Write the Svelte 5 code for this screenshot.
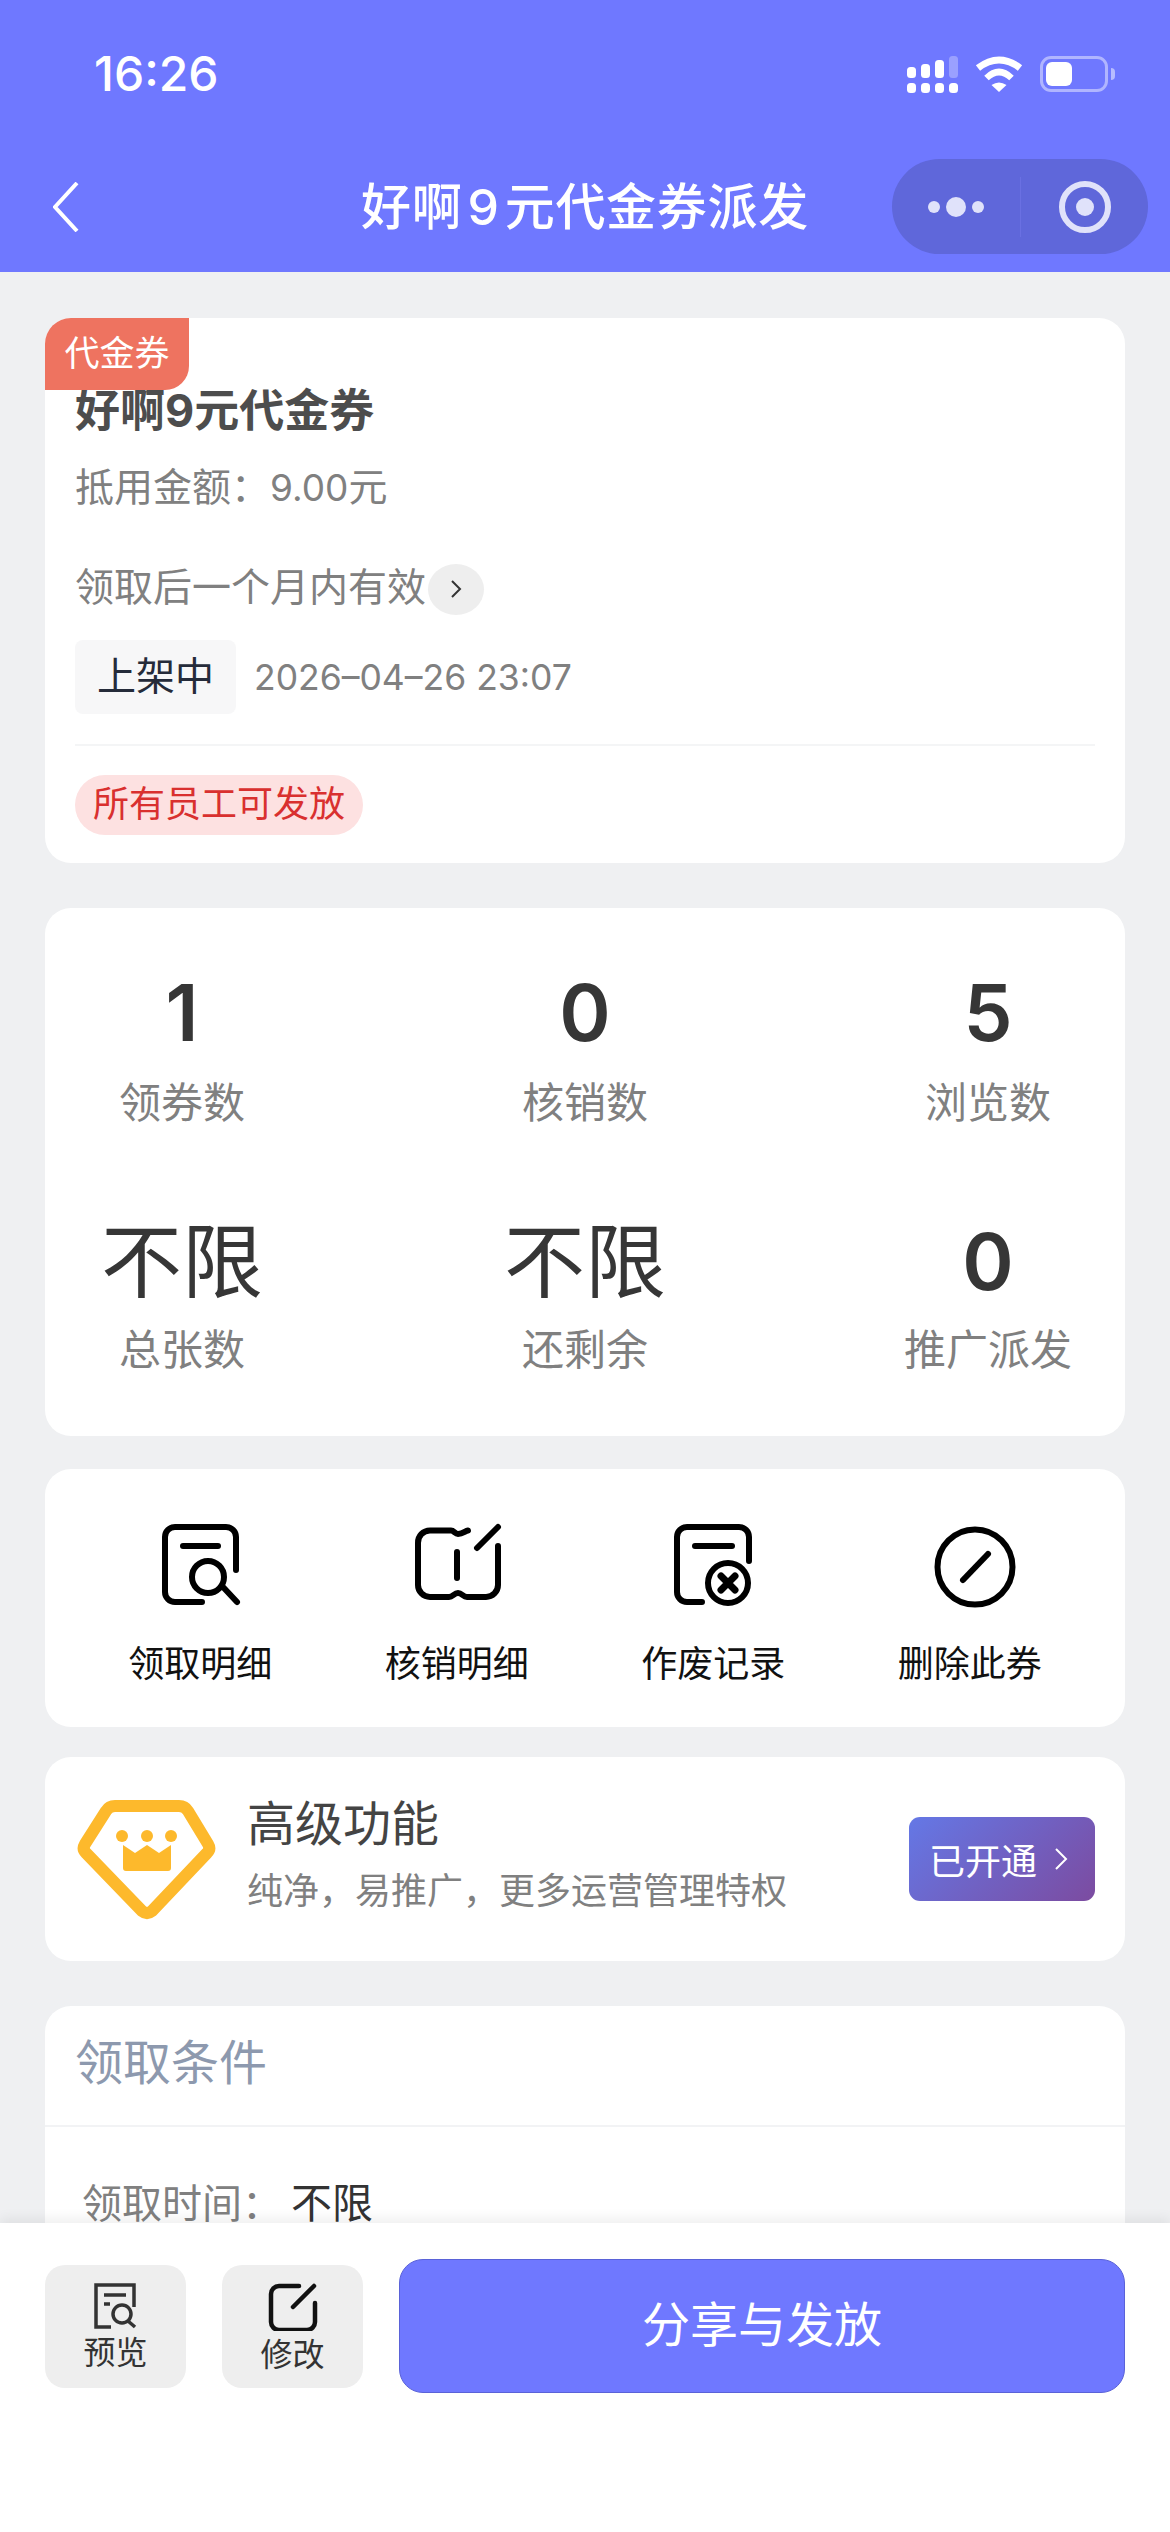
<script lang="ts">
	const stats = [
		{ value: '1', label: '领券数' },
		{ value: '0', label: '核销数' },
		{ value: '5', label: '浏览数' },
		{ value: '不限', label: '总张数' },
		{ value: '不限', label: '还剩余' },
		{ value: '0', label: '推广派发' }
	];
</script>

<div class="page">
	<header class="top">
		<div class="status">
			<span class="time">16:26</span>
			<div class="status-icons">
				<svg width="51" height="38" viewBox="0 0 51 38" fill="#fff">
					<rect x="0" y="11" width="9" height="11" rx="3.500" />
					<rect x="14" y="8" width="9" height="14" rx="3.500" />
					<rect x="28" y="4" width="9" height="18" rx="3.500" />
					<rect x="42" y="0" width="9" height="22" rx="3.500" opacity="0.3" />
					<rect x="0" y="27" width="9" height="10" rx="3.500" />
					<rect x="14" y="27" width="9" height="10" rx="3.500" />
					<rect x="28" y="27" width="9" height="10" rx="3.500" />
					<rect x="42" y="27" width="9" height="10" rx="3.500" />
				</svg>
				<svg class="wifi" width="48" height="36" viewBox="0 0 48 36" fill="none" stroke="#fff">
					<path d="M3 12Q24-4 45 12" stroke-width="7" />
					<path d="M11.500 22Q24 10 36.500 22" stroke-width="6.500" />
					<path d="M24 36l-7.500-7q7.500-5 15 0z" fill="#fff" stroke="none" />
				</svg>
				<div class="battery">
					<div class="battery-level"></div>
				</div>
				<div class="battery-cap"></div>
			</div>
		</div>
		<nav class="nav">
			<svg class="back" width="26" height="50" viewBox="0 0 26 50" fill="none" stroke="#fff" stroke-width="4">
				<path d="M24 1L2 25l22 24" />
			</svg>
			<h1>好啊<span class="nine">9</span>元代金券派发</h1>
			<div class="capsule">
				<div class="dots">
					<i></i><b></b><i></i>
				</div>
				<span class="capsule-line"></span>
				<div class="target"><span></span></div>
			</div>
		</nav>
	</header>

	<main class="content">
		<section class="card coupon">
			<span class="type-badge">代金券</span>
			<h2>好啊9元代金券</h2>
			<p class="amount">抵用金额：<span class="num">9.00</span>元</p>
			<div class="validity">
				<span>领取后一个月内有效</span>
				<span class="more">
					<svg width="12" height="20" viewBox="0 0 12 20" fill="none" stroke="#333" stroke-width="2">
						<path d="M2 2l8 8-8 8" />
					</svg>
				</span>
			</div>
			<div class="state-row">
				<span class="state">上架中</span>
				<span class="date">2026–04–26 23:07</span>
			</div>
			<div class="perm">
				<span class="pill">所有员工可发放</span>
			</div>
		</section>

		<section class="card stats">
			{#each stats as s}
				<div class="stat">
					<strong class:cjk={s.value === '不限'}>{s.value}</strong>
					<span>{s.label}</span>
				</div>
			{/each}
		</section>

		<section class="card actions">
			<div class="action">
				<svg viewBox="0 0 80 80" fill="none" stroke="#000" stroke-width="6" stroke-linecap="round">
					<path d="M42 78H15A10 10 0 0 1 5 68V13A10 10 0 0 1 15 3h51a10 10 0 0 1 10 10v33" />
					<path d="M23 22h35" />
					<circle cx="48" cy="53" r="16" />
					<path d="M63 63l14 15" />
				</svg>
				<span>领取明细</span>
			</div>
			<div class="action">
				<svg viewBox="0 0 80 80" fill="none" stroke="#000" stroke-width="6" stroke-linecap="round">
					<path d="M51 6.500c-3 .5-5 3.500-10 3.500-3 0-4-3.500-7-3.500H13A12 12 0 0 0 1 19v42a12 12 0 0 0 12 12h19c4 0 5-4 9-4s5 4 9 4h19a12 12 0 0 0 12-12V22" />
					<path d="M40 28v26" />
					<path d="M60 24L81 3" />
				</svg>
				<span>核销明细</span>
			</div>
			<div class="action">
				<svg viewBox="0 0 80 80" fill="none" stroke="#000" stroke-width="6" stroke-linecap="round">
					<path d="M29 78H14A10 10 0 0 1 4 68V13A10 10 0 0 1 14 3h52a10 10 0 0 1 10 10v24" />
					<path d="M22 22h37" />
					<circle cx="55" cy="59" r="20" />
					<path d="M48 52l14 14M62 52L48 66" stroke-width="7" />
				</svg>
				<span>作废记录</span>
			</div>
			<div class="action">
				<svg viewBox="0 0 80 80" fill="none" stroke="#000" stroke-width="6" stroke-linecap="round">
					<circle cx="45" cy="43" r="37.500" />
					<path d="M33 56l25-26" />
				</svg>
				<span>删除此券</span>
			</div>
		</section>

		<section class="card premium">
			<svg class="gem" width="140" height="120" viewBox="0 0 140 120">
				<path d="M38 6h64q6 0 9 5l20 33q3 5-1 9L75 111q-5 4-10 0L9 53q-4-4-1-9L29 11q3-5 9-5z" fill="none" stroke="#fdb92c" stroke-width="12" stroke-linejoin="round" />
				<g fill="#fdb92c">
					<circle cx="45" cy="36" r="6" />
					<circle cx="70" cy="36" r="6" />
					<circle cx="94" cy="36" r="6" />
					<path d="M46 45l12 8 12-8 12 8 12-8v23q0 3-3 3H49q-3 0-3-3z" />
				</g>
			</svg>
			<div class="premium-text">
				<h3>高级功能</h3>
				<p>纯净，易推广，更多运营管理特权</p>
			</div>
			<div class="opened">
				<span>已开通</span>
				<svg width="14" height="24" viewBox="0 0 14 24" fill="none" stroke="#fff" stroke-width="2">
					<path d="M2 2l10 10L2 22" />
				</svg>
			</div>
		</section>

		<section class="card conditions">
			<h3>领取条件</h3>
			<div class="cond-row">
				<span class="cond-label">领取时间：</span><span class="cond-value">不限</span>
			</div>
		</section>
	</main>

	<footer class="bottom">
		<div class="tile">
			<svg width="44" height="46" viewBox="0 0 44 46" fill="none" stroke="#333" stroke-width="3.500">
				<path d="M17 44H2V2h38v22" />
				<path d="M10 12h22M10 21h6" />
				<circle cx="28" cy="31" r="9" />
				<path d="M34 38l7 6" />
			</svg>
			<span>预览</span>
		</div>
		<div class="tile">
			<svg width="50" height="48" viewBox="0 0 50 48" fill="none" stroke="#111" stroke-width="4.500" stroke-linecap="round">
				<path d="M31 3H11a8 8 0 0 0-8 8v28a8 8 0 0 0 8 8h28a8 8 0 0 0 8-8V20" />
				<path d="M25 24L46 3" />
			</svg>
			<span>修改</span>
		</div>
		<button class="share">分享与发放</button>
	</footer>
</div>

<style>
	:global(body) {
		margin: 0;
		background: #eff0f2;
	}

	.page {
		width: 1170px;
		height: 2532px;
		overflow: hidden;
		position: relative;
		font-family: Inter, 'Noto Sans CJK SC', sans-serif;
		color: #333;
	}

	.top {
		height: 272px;
		background: #6f78ff;
		color: #fff;
	}

	.status {
		height: 150px;
		padding: 0 55px 0 94px;
		box-sizing: border-box;
		display: flex;
		justify-content: space-between;
		align-items: flex-start;
	}

	.time {
		margin-top: 46px;
		font-size: 48px;
		line-height: 56px;
		font-weight: 500;
	}

	.status-icons {
		margin-top: 56px;
		display: flex;
		align-items: flex-start;
	}

	.wifi {
		margin: 0 17px;
	}

	.battery {
		width: 68px;
		height: 36px;
		box-sizing: border-box;
		border: 3px solid rgba(255, 255, 255, 0.45);
		border-radius: 11px;
		padding: 3px;
	}

	.battery-level {
		width: 26px;
		height: 100%;
		background: #fff;
		border-radius: 6px;
	}

	.battery-cap {
		width: 4px;
		height: 12px;
		background: rgba(255, 255, 255, 0.5);
		border-radius: 0 4px 4px 0;
		margin: 12px 0 0 3px;
	}

	.nav {
		height: 122px;
		position: relative;
		display: flex;
		align-items: flex-start;
		padding: 9px 22px 0 53px;
		box-sizing: border-box;
		justify-content: space-between;
	}

	.back {
		margin-top: 23px;
	}

	.nav h1 {
		position: absolute;
		left: 0;
		width: 1170px;
		top: 22px;
		margin: 0;
		text-align: center;
		font-size: 50px;
		line-height: 70px;
		font-weight: 500;
		letter-spacing: 0.7px;
	}

	.nine {
		margin: 0 5px;
	}

	.capsule {
		width: 256px;
		height: 95px;
		border-radius: 48px;
		background: #5f67da;
		display: flex;
		align-items: center;
	}

	.dots {
		width: 128px;
		display: flex;
		align-items: center;
		justify-content: center;
		gap: 6px;
		box-sizing: border-box;
	}

	.dots i {
		width: 12px;
		height: 12px;
		border-radius: 50%;
		background: #e0e2fa;
	}

	.dots b {
		width: 20px;
		height: 20px;
		border-radius: 50%;
		background: #e0e2fa;
	}

	.capsule-line {
		width: 1px;
		height: 60px;
		background: #6a70e2;
	}

	.target {
		margin-left: 38px;
		width: 52px;
		height: 52px;
		box-sizing: border-box;
		border: 6px solid #e0e2fa;
		border-radius: 50%;
		display: flex;
		align-items: center;
		justify-content: center;
	}

	.target span {
		width: 18px;
		height: 18px;
		border-radius: 50%;
		background: #e0e2fa;
	}

	.content {
		padding: 46px 45px 0;
		display: flex;
		flex-direction: column;
	}

	.card {
		background: #fff;
		border-radius: 26px;
		box-sizing: border-box;
	}

	.coupon {
		position: relative;
		height: 545px;
		padding: 60px 30px 0;
	}

	.type-badge {
		position: absolute;
		left: 0;
		top: 0;
		width: 144px;
		height: 72px;
		background: #ee7360;
		color: #fff;
		font-size: 35px;
		line-height: 70px;
		text-align: center;
		border-radius: 26px 0 24px 0;
	}

	.coupon h2 {
		margin: 0;
		font-size: 45px;
		line-height: 66px;
		font-weight: 700;
		color: #4d4d4d;
	}

	.amount {
		margin: 12px 0 0;
		font-size: 39px;
		line-height: 62px;
		color: #808080;
	}

	.num {
		font-size: 37px;
	}

	.validity {
		margin-top: 37px;
		display: flex;
		align-items: center;
		font-size: 39px;
		line-height: 62px;
		color: #808080;
	}

	.more {
		width: 56px;
		height: 51px;
		margin-left: 2px;
		margin-top: 4px;
		border-radius: 50%;
		background: #eeeeee;
		display: flex;
		align-items: center;
		justify-content: center;
	}

	.state-row {
		margin-top: 22px;
		display: flex;
		align-items: center;
		gap: 18px;
	}

	.state {
		width: 161px;
		height: 74px;
		border-radius: 8px;
		background: #f7f7f8;
		color: #252b3a;
		font-size: 39px;
		line-height: 72px;
		text-align: center;
	}

	.date {
		font-size: 35.5px;
		color: #808080;
	}

	.perm {
		margin-top: 30px;
		padding-top: 29px;
		border-top: 2px solid #f4f5f6;
	}

	.pill {
		display: inline-block;
		height: 60px;
		padding: 0 18px;
		border-radius: 30px;
		background: #fde1e1;
		color: #d9302f;
		font-size: 36px;
		line-height: 58px;
	}

	.stats {
		margin-top: 45px;
		height: 528px;
		padding: 50px 53px 0;
		display: grid;
		grid-template-columns: repeat(3, 168px);
		grid-auto-rows: 247px;
		justify-content: space-between;
	}

	.stat {
		display: flex;
		flex-direction: column;
		align-items: center;
		white-space: nowrap;
	}

	.stat strong {
		font-size: 78px;
		line-height: 110px;
		font-weight: 600;
		color: #363636;
	}

	.stat:nth-child(n + 4) strong {
		margin-top: 2px;
		margin-bottom: -2px;
	}

	.stat strong.cjk {
		font-size: 81px;
		font-weight: 400;
	}

	.stat span {
		margin-top: 5px;
		font-size: 42px;
		line-height: 60px;
		color: #808080;
	}

	.actions {
		margin-top: 33px;
		height: 258px;
		padding: 55px 27px 0;
		display: grid;
		grid-template-columns: repeat(4, 1fr);
	}

	.action {
		display: flex;
		flex-direction: column;
		align-items: center;
		font-size: 36px;
		line-height: 52px;
		color: #111;
	}

	.action svg {
		width: 80px;
		height: 80px;
		overflow: visible;
		margin-bottom: 34px;
	}

	.premium {
		margin-top: 30px;
		height: 204px;
		padding: 43px 30px 0 32px;
		display: flex;
		align-items: flex-start;
	}

	.gem {
		flex: none;
	}

	.premium-text {
		margin-left: 30px;
		flex: 1;
		margin-top: -11px;
	}

	.premium-text h3 {
		margin: 0;
		font-size: 48px;
		line-height: 70px;
		font-weight: 400;
		color: #444;
	}

	.premium-text p {
		margin: 6px 0 0;
		font-size: 36px;
		line-height: 52px;
		color: #808080;
	}

	.opened {
		margin-top: 17px;
		width: 186px;
		height: 84px;
		border-radius: 11px;
		background: linear-gradient(135deg, #6478e6, #7c4ba0);
		color: #fff;
		font-size: 36px;
		display: flex;
		align-items: center;
		gap: 17px;
		padding-left: 20px;
		box-sizing: border-box;
	}

	.conditions {
		margin-top: 45px;
		height: 700px;
	}

	.conditions h3 {
		margin: 0;
		height: 121px;
		padding: 22px 30px 0;
		box-sizing: border-box;
		border-bottom: 2px solid #f2f3f5;
		font-size: 48px;
		line-height: 70px;
		font-weight: 400;
		color: #8d99ae;
	}

	.cond-row {
		padding: 47px 37px 0;
		font-size: 40px;
		line-height: 58px;
	}

	.cond-label {
		color: #808080;
	}

	.cond-value {
		margin-left: 9px;
		font-size: 41px;
		color: #333;
	}

	/* fixed bar over the scrolling content */
	.bottom {
		position: absolute;
		left: 0;
		right: 0;
		top: 2223px;
		height: 309px;
		box-sizing: border-box;
		background: #fff;
		box-shadow: 0 -4px 12px rgba(0, 0, 0, 0.07);
		padding: 36px 45px 0;
		display: flex;
		align-items: flex-start;
		gap: 36px;
	}

	.tile {
		width: 141px;
		height: 123px;
		margin-top: 6px;
		border-radius: 20px;
		background: #eeeeee;
		display: flex;
		flex-direction: column;
		align-items: center;
		padding-top: 18px;
		box-sizing: border-box;
		font-size: 32px;
		line-height: 44px;
		color: #333;
	}

	.tile span {
		margin-top: 2px;
	}

	.share {
		width: 726px;
		height: 134px;
		border: 1px solid #5a62d8;
		border-radius: 24px;
		background: #6f78ff;
		color: #fff;
		font-family: inherit;
		font-size: 48px;
		padding: 0 0 10px;
	}
</style>
